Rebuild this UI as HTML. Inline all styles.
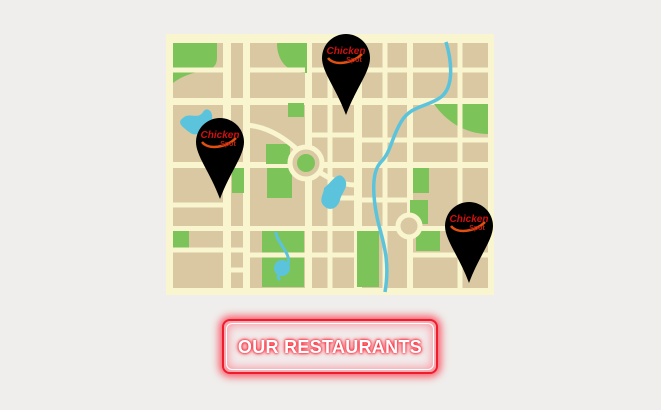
<!DOCTYPE html><html><head><style>
body{margin:0;width:661px;height:410px;background:#efeeec;overflow:hidden;font-family:"Liberation Sans",sans-serif;position:relative}
.btn{position:absolute;left:222px;top:319px;width:216px;height:55px;box-sizing:border-box;border:2px solid #f01c2c;border-radius:8px;box-shadow:0 0 8px 3px rgba(255,40,60,.75),inset 0 0 10px 4px rgba(255,60,80,.5);background:#f2eeee}
.btn:after{content:"";position:absolute;left:2px;top:2px;right:2px;bottom:2px;border:1px solid #fff;border-radius:6px}
.btn span{position:absolute;left:0;right:0;top:16px;text-align:center;color:#fff;font-weight:bold;font-size:18px;letter-spacing:.3px;text-shadow:0 0 3px #ff2030,0 0 6px #ff4050,0 0 2px #e01020}
</style></head><body>
<svg width="661" height="410" style="position:absolute;left:0;top:0">
<defs><g id="p"><path d="M-24 0a24 24 0 0 1 48 0c0 14-14 30-24 57c-10-27-24-43-24-57z" fill="#000"/>
<path d="M-18 0c6 8 24 6 34-4" stroke="#e05010" stroke-width="2.5" fill="none"/><text x="0" y="-4" font-size="10" font-style="italic" font-weight="bold" fill="#d01010" text-anchor="middle" font-family="Liberation Sans">Chicken</text><text x="8" y="4" font-size="7" font-weight="bold" fill="#c02010" text-anchor="middle">Spot</text></g></defs>
<rect x="166" y="34" width="328" height="261" fill="#f8f5cf"/>
<g fill="#d9c8a2">
<rect x="173" y="43" width="50" height="55"/><rect x="231" y="43" width="12" height="55"/><rect x="250" y="43" width="55" height="55"/><rect x="312" y="43" width="42" height="55"/><rect x="362" y="43" width="45" height="55"/><rect x="413" y="43" width="75" height="55"/>
<rect x="173" y="105" width="50" height="57"/><rect x="231" y="105" width="12" height="57"/><rect x="250" y="105" width="55" height="57"/><rect x="312" y="105" width="42" height="57"/><rect x="362" y="105" width="45" height="57"/><rect x="413" y="105" width="75" height="57"/>
<rect x="173" y="168" width="50" height="58"/><rect x="231" y="168" width="12" height="58"/><rect x="250" y="168" width="55" height="58"/><rect x="312" y="168" width="42" height="58"/><rect x="362" y="168" width="45" height="58"/><rect x="413" y="168" width="75" height="58"/>
<rect x="173" y="231" width="50" height="57"/><rect x="231" y="231" width="12" height="57"/><rect x="250" y="231" width="55" height="57"/><rect x="312" y="231" width="42" height="57"/><rect x="362" y="231" width="45" height="57"/><rect x="413" y="231" width="75" height="57"/>
</g>
<g fill="#7cc35a">
<path d="M173 43h44v14c0 20-20 8-44 26z"/><path d="M277 43h30v30c-20 0-30-12-30-30z"/><rect x="288" y="103" width="16" height="14"/><path d="M434 104h54v30c-20 0-40-10-54-30z"/>
<rect x="266" y="144" width="24" height="20"/><rect x="232" y="168" width="12" height="25"/><rect x="267" y="168" width="25" height="30"/><rect x="413" y="168" width="16" height="25"/><rect x="410" y="200" width="18" height="24"/>
<rect x="173" y="231" width="16" height="20"/><rect x="262" y="231" width="42" height="56"/><rect x="357" y="231" width="22" height="56"/><rect x="416" y="231" width="24" height="20"/>
</g>
<g fill="none" stroke="#f8f5cf" stroke-width="5">
<path d="M173 70h50M173 205h50M173 250h50M231 250h12M231 270h12M250 70h55M312 70h42M312 135h42M362 70h45M413 70h75M413 140h75M413 255h75M362 140h45M362 200h45M330 43v245M385 43v245M460 43v245M312 255h42M250 255h55M330 198h24"/>
<path d="M243 125c20 0 40 10 60 30M305 160c20 20 40 25 50 25"/>
</g>
<circle cx="306" cy="163" r="16" fill="#d9c8a2" stroke="#f8f5cf" stroke-width="5"/><circle cx="306" cy="163" r="9" fill="#7cc35a"/>
<circle cx="409" cy="226" r="11" fill="#d9c8a2" stroke="#f8f5cf" stroke-width="5"/>
<path d="M446 42c6 20 8 45-5 55s-30 8-40 25-10 30-20 40-8 35-4 55 14 40 8 75" fill="none" stroke="#5bc4dc" stroke-width="3.5"/>
<path d="M276 232c0 10 16 22 12 32s-14 10-8 16" fill="none" stroke="#5bc4dc" stroke-width="3"/><circle cx="282" cy="268" r="8" fill="#5bc4dc"/>
<path d="M183 118c6-6 15 2 20-6s14 4 6 12-12 14-20 8-12-10-6-14z" fill="#5bc4dc"/>
<path d="M324 188c8-6 14-18 20-10s-2 14-4 22-10 12-16 6 0-12 0-18z" fill="#5bc4dc"/>
<use href="#p" x="346" y="58"/><use href="#p" x="220" y="142"/><use href="#p" x="469" y="226"/>
</svg>
<div class="btn"><span>OUR RESTAURANTS</span></div>
</body></html>
